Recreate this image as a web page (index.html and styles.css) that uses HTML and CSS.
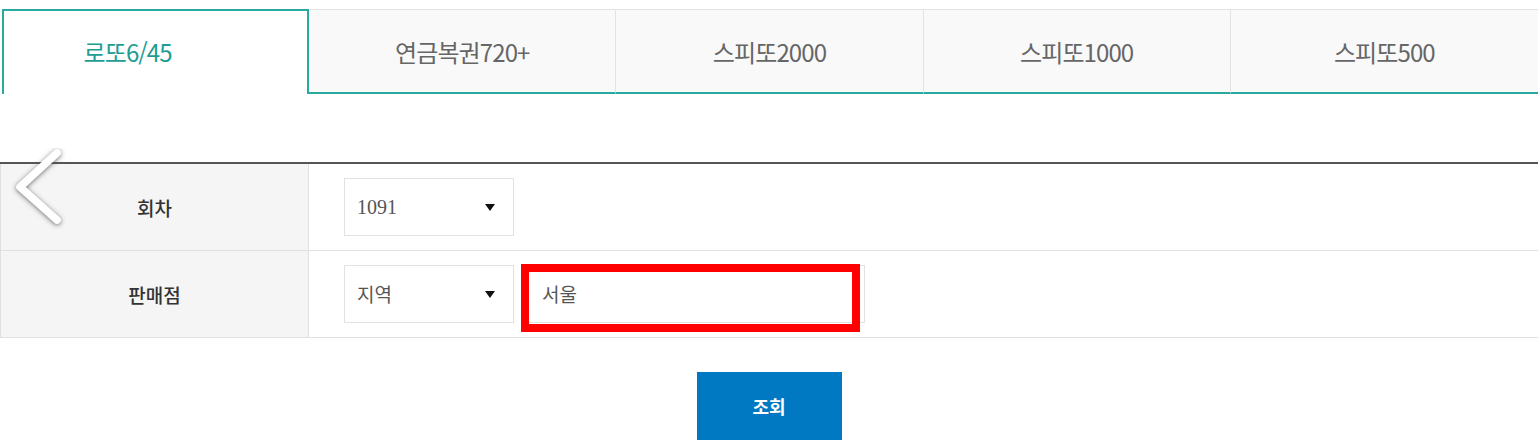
FILE: index.html
```html
<!DOCTYPE html>
<html lang="ko">
<head>
  <meta charset="UTF-8">
  <title>판매점 조회</title>
  <link rel="stylesheet" href="styles.css">
</head>
<body>
  <ul class="tabList">
    <li class="active">로또6/45</li>
    <li>연금복권720+</li>
    <li>스피또2000</li>
    <li>스피또1000</li>
    <li>스피또500</li>
  </ul>

  <div class="searchWrap">
    <table class="searchTbl">
      <tr>
        <th>회차</th>
        <td>
          <div class="selBox num">1091<span class="arrow"></span></div>
        </td>
      </tr>
      <tr>
        <th>판매점</th>
        <td>
          <div class="fieldRow">
            <div class="selBox">지역<span class="arrow"></span></div>
            <div class="inputBox">서울<span class="mark"></span></div>
          </div>
        </td>
      </tr>
    </table>

    <svg class="prevBtn" width="70" height="90" viewBox="0 0 70 90">
      <defs>
        <filter id="shadow" x="-50%" y="-50%" width="200%" height="200%">
          <feDropShadow dx="0" dy="1" stdDeviation="2.4" flood-color="#444" flood-opacity="0.8"></feDropShadow>
        </filter>
      </defs>
      <polyline points="57,5 20,39 57,72" fill="none" stroke="#fff" stroke-width="7.5" stroke-linecap="round" stroke-linejoin="round" filter="url(#shadow)"></polyline>
    </svg>
  </div>

  <div class="btnArea">
    <button class="btnSearch">조회</button>
  </div>
</body>
</html>
```

FILE: styles.css
```css
body{margin: 0; background: #fff; font-family: "Noto Sans CJK KR", "Noto Sans", sans-serif; color: #333;}

.tabList{display: flex; margin: 9px 0 0 2px; padding: 0; list-style: none;}
.tabList li{flex: none; width: 20%; box-sizing: border-box; height: 85px; line-height: 83px; text-align: center; font-size: 24px; letter-spacing: -0.9px; color: #666; background: #f9f9f9; border-top: 1px solid #e3e3e3; border-right: 1px solid #e3e3e3; border-bottom: 2px solid #2aa9a0;}
.tabList li:last-child{border-right: 0;}
.tabList li.active{line-height: 81px; padding-right: 56px; color: #1d9d94; background: #fff; border: 2px solid #2aa9a0; border-bottom: 0;}

.searchWrap{position: relative; margin-top: 68px;}
.searchTbl{width: 100%; border-collapse: collapse; border-top: 2px solid #555;}
.searchTbl th, .searchTbl td{height: 86px; padding: 0; border-bottom: 1px solid #e0e0e0;}
.searchTbl th{width: 307px; background: #f5f5f5; border-left: 1px solid #e0e0e0; border-right: 1px solid #e0e0e0; font-size: 19px; font-weight: 500; color: #333;}
.searchTbl td{padding-left: 35px;}

.fieldRow{display: flex; gap: 7px;}
.selBox{position: relative; box-sizing: border-box; width: 170px; height: 58px; line-height: 56px; padding-left: 12px; border: 1px solid #e2e2e2; font-size: 19px; color: #555; background: #fff;}
.selBox.num{font-family: "Liberation Serif", serif; font-size: 20px;}
.selBox .arrow{position: absolute; right: 18px; top: 25px; border-left: 5px solid transparent; border-right: 5px solid transparent; border-top: 7px solid #111;}

.inputBox{position: relative; box-sizing: border-box; width: 344px; height: 58px; line-height: 56px; padding-left: 20px; border: 1px solid #e2e2e2; font-size: 19px; color: #555;}
.inputBox .mark{position: absolute; left: -1px; top: -2px; box-sizing: border-box; width: 339px; height: 68px; border: 8px solid #ff0000;}

.prevBtn{position: absolute; left: 0; top: -14px;}

.btnArea{display: flex; justify-content: center; margin-top: 34px;}
.btnSearch{width: 145px; height: 68px; border: 0; background: #0079c2; color: #fff; font-family: "Noto Sans CJK KR", sans-serif; font-size: 18px; font-weight: 700;}
```
